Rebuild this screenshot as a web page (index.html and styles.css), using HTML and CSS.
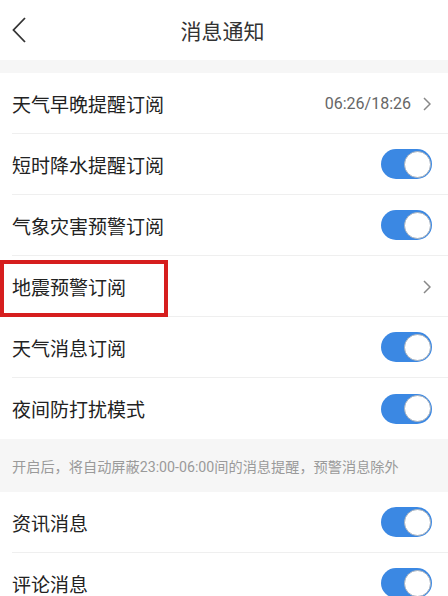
FILE: index.html
```html
<!DOCTYPE html>
<html lang="zh-CN">
<head>
    <meta charset="UTF-8">
    <meta name="viewport" content="width=device-width, initial-scale=1.0">
    <title>消息通知</title>
    <link rel="stylesheet" href="styles.css">
</head>
<body>

    <div class="top-bar">
        <svg class="back" width="16" height="28" viewBox="0 0 16 28">
            <polyline points="14,2 2.5,14 14,26" fill="none" stroke="#333" stroke-width="1.8" />
        </svg>
        <div class="title">消息通知</div>
    </div>

    <div class="gap"></div>

    <div class="list">
        <div class="row">
            <span class="label">天气早晚提醒订阅</span>
            <span class="extra">06:26/18:26</span>
            <svg class="arrow" width="8" height="14" viewBox="0 0 8 14">
                <polyline points="1,1 7,7 1,13" fill="none" stroke="#888" stroke-width="1.5" />
            </svg>
        </div>
        <div class="row">
            <span class="label">短时降水提醒订阅</span>
            <span class="switch on"><span class="knob"></span></span>
        </div>
        <div class="row">
            <span class="label">气象灾害预警订阅</span>
            <span class="switch on"><span class="knob"></span></span>
        </div>
        <div class="row marked">
            <span class="label">地震预警订阅</span>
            <svg class="arrow" width="8" height="14" viewBox="0 0 8 14">
                <polyline points="1,1 7,7 1,13" fill="none" stroke="#888" stroke-width="1.5" />
            </svg>
            <div class="red-box"></div>
        </div>
        <div class="row">
            <span class="label">天气消息订阅</span>
            <span class="switch on"><span class="knob"></span></span>
        </div>
        <div class="row last">
            <span class="label">夜间防打扰模式</span>
            <span class="switch on"><span class="knob"></span></span>
        </div>
    </div>

    <div class="note">开启后，将自动屏蔽23:00-06:00间的消息提醒，预警消息除外</div>

    <div class="list">
        <div class="row">
            <span class="label">资讯消息</span>
            <span class="switch on"><span class="knob"></span></span>
        </div>
        <div class="row">
            <span class="label">评论消息</span>
            <span class="switch on"><span class="knob"></span></span>
        </div>
    </div>

</body>
</html>
```

FILE: styles.css
```css
body {
    margin: 0;
    background: #fff;
    font-family: Roboto, 'Noto Sans CJK SC', sans-serif;
    color: #222;
    overflow: hidden;
}

.top-bar {
    height: 60px;
    display: flex;
    align-items: center;
    justify-content: center;
    position: relative;
}

.back {
    position: absolute;
    left: 11px;
    top: 16px;
}

.title {
    font-size: 21px;
    color: #333;
    margin-left: -3px;
}

.gap {
    height: 13px;
    background: #f6f6f6;
}

.row {
    height: 60px;
    margin-left: 12px;
    padding-right: 17px;
    border-bottom: 1px solid #efefef;
    display: flex;
    align-items: center;
    position: relative;
}

.row.last {
    border-bottom: none;
    height: 61px;
}

.label {
    flex: 1;
    font-size: 19px;
    color: #222;
}

.extra {
    font-size: 16px;
    color: #666;
    margin-right: 12px;
}

.arrow {
    margin-top: 1px;
}

.switch {
    width: 51px;
    height: 30px;
    border-radius: 15px;
    background: #3b88e3;
    display: flex;
    align-items: center;
    justify-content: flex-end;
    box-sizing: border-box;
    padding: 1px;
    margin-right: -1px;
}

.knob {
    width: 27px;
    height: 27px;
    border-radius: 50%;
    background: #fff;
    border: 1px solid #a9b2bd;
    box-sizing: border-box;
}

/* highlight box drawn over the earthquake row */
.red-box {
    position: absolute;
    left: -12px;
    top: 4px;
    width: 168px;
    height: 57px;
    border: 4px solid #d61e1e;
    box-sizing: border-box;
}

.note {
    height: 53px;
    background: #f6f6f6;
    padding-left: 12px;
    display: flex;
    align-items: center;
    font-size: 14.2px;
    color: #9a9a9a;
    white-space: nowrap;
}
```
